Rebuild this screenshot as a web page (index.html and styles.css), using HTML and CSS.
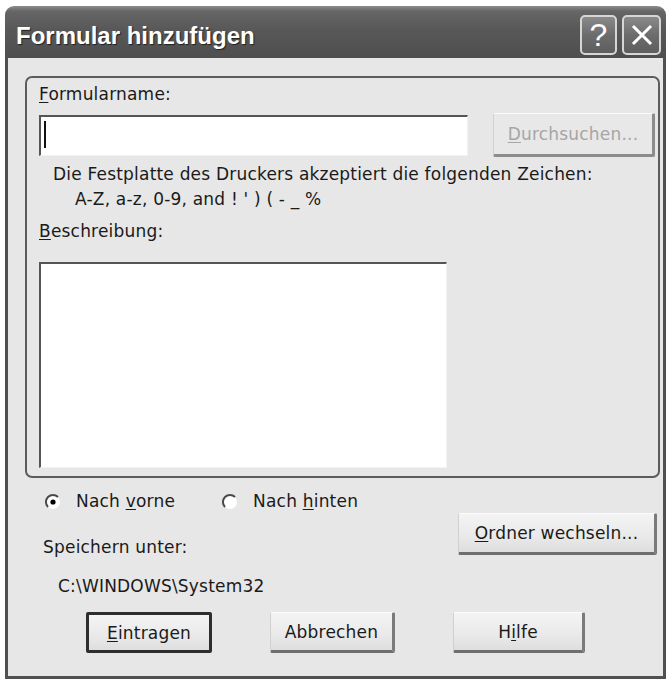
FILE: index.html
```html
<!DOCTYPE html>
<html lang="de">
<head>
    <meta charset="UTF-8">
    <title>Formular hinzufügen</title>
    <link rel="stylesheet" href="styles.css">
</head>
<body>
    <div class="window">
        <div class="titlebar">
            <span class="title">Formular hinzufügen</span>
            <div class="title-buttons">
                <span class="tb-btn tb-help">?</span>
                <span class="tb-btn tb-close">
                    <svg width="22" height="22" viewBox="0 0 22 22">
                        <path d="M3 3L19 19M19 3L3 19" stroke="#fff" stroke-width="3" stroke-linecap="square"/>
                    </svg>
                </span>
            </div>
        </div>

        <div class="dialog-body">
            <div class="group">
                <div class="label"><u>F</u>ormularname:</div>
                <div class="name-row">
                    <div class="textbox name-input"><span class="caret"></span></div>
                    <button class="btn btn-disabled browse-btn"><u>D</u>urchsuchen...</button>
                </div>
                <div class="hint">
                    <div>Die Festplatte des Druckers akzeptiert die folgenden Zeichen:</div>
                    <div class="hint-chars">A-Z, a-z, 0-9, and ! ' ) ( - _ %</div>
                </div>
                <div class="label desc-label"><u>B</u>eschreibung:</div>
                <div class="textbox desc-box"></div>
            </div>

            <div class="radio-row">
                <label class="radio">
                    <svg width="18" height="18" viewBox="0 0 18 18">
                        <circle cx="9" cy="9" r="7" fill="#fff"/>
                        <path d="M4 14A7 7 0 0 1 14 4" stroke="#4a4a4a" stroke-width="2" fill="none"/>
                        <circle cx="9" cy="9" r="2.6" fill="#000"/>
                    </svg>
                    <span>Nach <u>v</u>orne</span>
                </label>
                <label class="radio radio-second">
                    <svg width="18" height="18" viewBox="0 0 18 18">
                        <circle cx="9" cy="9" r="7" fill="#fff"/>
                        <path d="M4 14A7 7 0 0 1 14 4" stroke="#4a4a4a" stroke-width="2" fill="none"/>
                    </svg>
                    <span>Nach <u>h</u>inten</span>
                </label>
            </div>

            <div class="save-row">
                <div class="save-info">
                    <div>Speichern unter:</div>
                    <div class="save-path">C:\WINDOWS\System32</div>
                </div>
                <button class="btn folder-btn"><u>O</u>rdner wechseln...</button>
            </div>

            <div class="button-row">
                <button class="btn btn-default btn-add"><u>E</u>intragen</button>
                <button class="btn btn-cancel">Abbrechen</button>
                <button class="btn btn-help">H<u>i</u>lfe</button>
            </div>
        </div>
    </div>
</body>
</html>
```

FILE: styles.css
```css
* {
    margin: 0;
    padding: 0;
    box-sizing: border-box;
}

body {
    font-family: "DejaVu Sans", Verdana, sans-serif;
    font-size: 17px;
    line-height: 19px;
    letter-spacing: 0.2px;
    color: #1a1a1a;
    background: #fff;
}

u {
    text-decoration: underline;
    text-underline-offset: 2px;
}

.window {
    width: 661px;
    margin: 6px 0 0 5px;
}

/* Title bar */
.titlebar {
    height: 52px;
    padding: 6px 5px 0 11px;
    display: flex;
    align-items: center;
    justify-content: space-between;
    border-radius: 9px 9px 0 0;
    background: linear-gradient(180deg, #8c8c8c 0, #666 10%, #585858 45%, #4e4e4e 100%);
}

.title {
    font-family: "Liberation Sans", Arial, sans-serif;
    font-weight: bold;
    font-size: 24px;
    line-height: 28px;
    letter-spacing: 0;
    padding-top: 2px;
    color: #fff;
    text-shadow: 1px 1px 1px #222;
}

.title-buttons {
    display: flex;
    gap: 5px;
}

.tb-btn {
    height: 40px;
    display: flex;
    align-items: center;
    justify-content: center;
    border: 2px solid #d6d6d6;
    border-radius: 5px;
    background: linear-gradient(180deg, #8a8a8a 0, #6c6c6c 50%, #5e5e5e 100%);
    color: #fff;
}

.tb-help {
    width: 37px;
    font-family: "Liberation Sans", Arial, sans-serif;
    font-size: 32px;
    line-height: 32px;
    letter-spacing: 0;
}

.tb-close {
    width: 39px;
}

/* Dialog body */
.dialog-body {
    background: #e7e7e7;
    border: 3px solid #505050;
    border-top: none;
    padding: 18px 3px 23px 17px;
}

.group {
    border: 2px solid #5c5c5c;
    border-radius: 7px;
    padding: 7px 3px 8px 12px;
}

.label {
    margin-bottom: 9px;
}

.name-row {
    display: flex;
    align-items: center;
    gap: 25px;
    height: 44px;
}

.textbox {
    background: #fff;
    border-top: 2px solid #555;
    border-left: 2px solid #555;
    border-right: 1px solid #f2f2f2;
    border-bottom: 1px solid #f2f2f2;
}

.name-input {
    width: 429px;
    height: 41px;
    padding: 4px 0 0 3px;
}

.caret {
    display: block;
    width: 2px;
    height: 27px;
    background: #111;
}

.hint {
    margin-top: 5px;
    padding-left: 14px;
    line-height: 25px;
}

.hint-chars {
    padding-left: 22px;
}

.desc-label {
    margin-top: 10px;
    margin-bottom: 21px;
}

.desc-box {
    width: 408px;
    height: 206px;
}

/* Buttons */
.btn {
    font-family: "DejaVu Sans", Verdana, sans-serif;
    font-size: 17px;
    letter-spacing: 0.2px;
    color: #1a1a1a;
    background: linear-gradient(180deg, #f4f4f4 0, #e9e9e9 60%, #dedede 100%);
    border-top: 1px solid #fbfbfb;
    border-left: 1px solid #d0d0d0;
    border-right: 3px solid #7a7a7a;
    border-bottom: 3px solid #6e6e6e;
    border-radius: 2px;
}

.btn-disabled {
    color: #a6a6a6;
    background: #e8e8e8;
    border-right-color: #8c8c8c;
    border-bottom-color: #8c8c8c;
}

.browse-btn {
    width: 162px;
    height: 44px;
}

.btn-default {
    border: 3px solid #2e2e2e;
}

/* Radio row */
.radio-row {
    margin-top: 14px;
    padding-left: 19px;
    display: flex;
    align-items: center;
}

.radio {
    display: flex;
    align-items: center;
    gap: 14px;
}

.radio-second {
    margin-left: 46px;
}

.save-row {
    margin-top: 2px;
    padding: 0 3px 0 18px;
    display: flex;
    justify-content: space-between;
    align-items: flex-start;
}

.save-info {
    padding-top: 25px;
}

.save-path {
    margin-top: 20px;
    padding-left: 15px;
}

.folder-btn {
    width: 199px;
    height: 42px;
}

.button-row {
    margin-top: 16px;
    padding-left: 61px;
    display: flex;
    gap: 58px;
}

.button-row .btn {
    height: 41px;
}

.btn-add {
    width: 126px;
}

.btn-cancel {
    width: 125px;
}

.btn-help {
    width: 132px;
}
```
